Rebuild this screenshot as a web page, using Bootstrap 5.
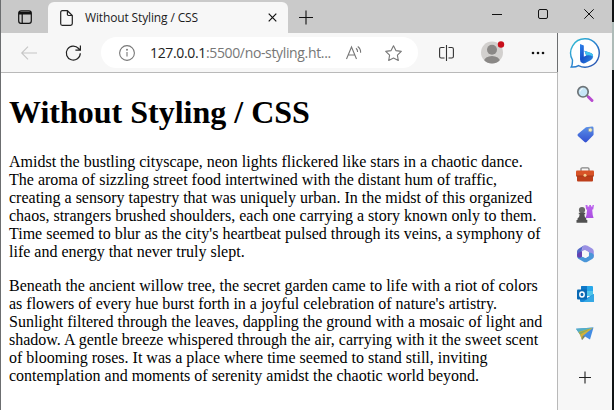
<!DOCTYPE html>
<html lang="en">
<head>
<meta charset="utf-8">
<meta name="viewport" content="width=device-width, initial-scale=1">
<title>Without Styling / CSS</title>
<link href="https://cdn.jsdelivr.net/npm/bootstrap@5.3.0/dist/css/bootstrap.min.css" rel="stylesheet">
<style>
  body { width: 614px; height: 410px; overflow: hidden; background: #f7f7f7; color: #000; }
  svg { display: block; flex: none; overflow: visible; }
  .browser { height: 410px; padding: 0 2px 0 1px; background: linear-gradient(#101314 22px, #aebbb8 22px 70px, #101314 70px) right / 2px 100% no-repeat, #6c6e70; }
  .titlebar { height: 33px; background: #cacaca; }
  .tab-menu { width: 47px; border-bottom-right-radius: 4px; padding-left: 17px; background: #c9c9c9; }
  .page-tab { width: 240px; height: 31px; background: #f7f7f7; border-radius: 6px 6px 0 0; padding: 0 7px 0 12px; }
  .tab-name { font: 12px/16px "Open Sans", "Noto Sans", sans-serif; letter-spacing: -.14px; margin-left: 12px; white-space: nowrap; color: #1c1c1c; }
  .new-tab { margin-left: 11px; }
  .window-buttons { height: 28px; gap: 36px; padding-right: 18px; }
  .toolbar { width: 556px; height: 39px; background: #f7f7f7; }
  .back { margin-left: 20px; }
  .reload { margin-left: 28px; }
  .split { margin-left: 21px; }
  .profile, .more { margin-left: 27px; }
  .address { width: 317px; height: 31px; background: #fff; border-radius: 16px; margin-left: 19px; padding: 0 16px 0 18px; }
  .url { font: 14px/20px "Open Sans", "Noto Sans", sans-serif; white-space: nowrap; color: #777; width: 196px; margin-left: 15px; letter-spacing: -.35px; }
  .url span { color: #222; }
  .viewport { width: 557px; border-top: 1px solid #b9b9b9; border-right: 1px solid #b9b9b9; background: #fff; padding: 21px 0 0 8px; font-family: "Liberation Serif", "Times New Roman", serif; }
  .viewport h1 { font-size: 32px; line-height: 36px; font-weight: 700; margin: 0 0 23px; }
  .viewport p { font-size: 16px; line-height: 18px; margin: 0 0 16px; white-space: nowrap; }
  .sidebar { width: 54px; background: #f7f7f7; }
  .slot { height: 40px; width: 54px; }
  .tools { padding-top: 1px; }
</style>
</head>
<body>
<div class="browser d-flex flex-column">
  <header class="titlebar d-flex align-items-end flex-shrink-0">
    <div class="tab-menu h-100 d-flex align-items-center">
      <svg width="14" height="14" viewBox="0 0 14 14" fill="none" stroke="#111" stroke-width="1.2"><rect x=".7" y=".8" width="12.6" height="12.5" rx="2.3"/><path d="M1 2.6h12M1 3.6h12" stroke-width="1.8"/><path d="M4.2 4v9"/></svg>
    </div>
    <div class="page-tab d-flex align-items-center">
      <svg width="13" height="16" viewBox="0 0 13 16" fill="none" stroke="#222" stroke-width="1.2"><path d="M2.3.7h5.1l4.9 4.8v8.1q0 1.7-1.7 1.7H2.3Q.7 15.3.7 13.6V2.4Q.7.7 2.3.7zM7.4.9v3.4q0 1.200 1.200 1.200h3.500"/></svg>
      <span class="tab-name">Without Styling / CSS</span>
      <svg class="ms-auto me-1" width="9" height="9" viewBox="0 0 9 9" stroke="#111" stroke-width="1.2"><path d="M.7.7l7.600 7.600M8.300.7L.7 8.300"/></svg>
    </div>
    <svg class="new-tab align-self-center" width="14" height="14" viewBox="0 0 14 14" stroke="#111" stroke-width="1.1"><path d="M0 7.500h14M7 .5v14"/></svg>
    <div class="window-buttons d-flex align-items-center ms-auto mb-auto">
      <svg width="10" height="10" viewBox="0 0 10 10" stroke="#111"><path d="M0 5.500h10"/></svg>
      <svg width="10" height="10" viewBox="0 0 10 10" fill="none" stroke="#111"><rect x=".5" y=".5" width="9" height="9" rx="1.500"/></svg>
      <svg width="10" height="10" viewBox="0 0 10 10" stroke="#111"><path d="M.3.3l9.400 9.400M9.700.3L.3 9.700"/></svg>
    </div>
  </header>
  <div class="d-flex flex-grow-1">
    <div class="d-flex flex-column">
      <nav class="toolbar d-flex align-items-center flex-shrink-0">
        <svg class="back" width="16" height="14" viewBox="0 0 16 14" fill="none" stroke="#c6c6c6" stroke-width="1.1"><path d="M16 7H.8M7 .7L.7 7l6.300 6.300"/></svg>
        <svg class="reload" width="17" height="16" viewBox="0 0 17 16" fill="none" stroke="#222" stroke-width="1.200"><path d="M15.300 8.200A7 7 0 1 1 13.600 3.500L15.200 5.100M15.400.4v4.800h-5"/></svg>
        <div class="address d-flex align-items-center">
          <svg width="16" height="16" viewBox="0 0 16 16" fill="none" stroke="#777" stroke-width="1.100"><circle cx="8" cy="8" r="7.400"/><path d="M8 7v4.500"/><circle cx="8" cy="4.800" r=".4"/></svg>
          <div class="url"><span>127.0.0.1</span>:5500/no-styling.ht...</div>
          <svg width="16" height="14" viewBox="0 0 16 14" fill="none" stroke="#777" stroke-width="1.100"><path d="M.5 13L5.500 1l5 12M2.300 9h6.500M10 2.200q1.700 1.300 1.600 3.800M11.700.5q3.200 2.300 2.900 6.300"/></svg>
          <svg class="ms-auto" width="17" height="16" viewBox="0 0 17 16" fill="none" stroke="#777" stroke-width="1.100" stroke-linejoin="round"><path d="M8.500.7l2.400 4.900 5.400.8-3.900 3.800.9 5.300-4.800-2.500-4.800 2.500.9-5.300L.7 6.400l5.400-.8z"/></svg>
        </div>
        <svg class="split" width="15" height="16" viewBox="0 0 15 16" fill="none" stroke="#333" stroke-width="1.100"><path d="M7.500 0v16M5.500 2.500H2.200Q.6 2.500.6 4.100v7.300Q.6 13 2.200 13h3.300M9.500 2.500h3.300q1.600 0 1.600 1.600v7.300q0 1.600-1.600 1.600H9.500"/></svg>
        <svg class="profile" width="23" height="23" viewBox="0 0 23 23"><defs><clipPath id="face"><circle cx="11" cy="11.500" r="11"/></clipPath></defs><g clip-path="url(#face)"><path fill="#d2d0ce" d="M0 0h23v23H0z"/><circle cx="11" cy="8.700" r="5" fill="#8a8886"/><ellipse cx="11" cy="20.500" rx="8" ry="5.500" fill="#8a8886"/></g><circle cx="20" cy="3.500" r="3.200" fill="#c80f1b"/></svg>
        <svg class="more" width="14" height="4" viewBox="0 0 14 4" fill="#111"><circle cx="2" cy="2" r="1.300"/><circle cx="7" cy="2" r="1.300"/><circle cx="12" cy="2" r="1.300"/></svg>
      </nav>
      <main class="viewport flex-grow-1">
        <h1>Without Styling / CSS</h1>
        <p>Amidst the bustling cityscape, neon lights flickered like stars in a chaotic dance.<br>The aroma of sizzling street food intertwined with the distant hum of traffic,<br>creating a sensory tapestry that was uniquely urban. In the midst of this organized<br>chaos, strangers brushed shoulders, each one carrying a story known only to them.<br>Time seemed to blur as the city's heartbeat pulsed through its veins, a symphony of<br>life and energy that never truly slept.</p>
        <p>Beneath the ancient willow tree, the secret garden came to life with a riot of colors<br>as flowers of every hue burst forth in a joyful celebration of nature's artistry.<br>Sunlight filtered through the leaves, dappling the ground with a mosaic of light and<br>shadow. A gentle breeze whispered through the air, carrying with it the sweet scent<br>of blooming roses. It was a place where time seemed to stand still, inviting<br>contemplation and moments of serenity amidst the chaotic world beyond.</p>
      </main>
    </div>
    <aside class="sidebar d-flex flex-column">
      <div class="slot d-flex align-items-center justify-content-center">
        <svg width="30" height="30" viewBox="0 0 30 30"><defs><linearGradient id="ring" x1="0" x2="1" y1="0" y2="1"><stop stop-color="#36c5d4"/><stop offset=".5" stop-color="#2884d0"/><stop offset="1" stop-color="#2948a8"/></linearGradient><linearGradient id="bee" x1="0" x2="1" y1="0" y2="1"><stop stop-color="#2f86ee"/><stop offset=".45" stop-color="#1750c9"/><stop offset="1" stop-color="#2f8fe0"/></linearGradient></defs><path d="M15 .8a14.200 14.200 0 1 1-6.500 26.800Q5.500 29.400 1.200 29q1.200-1.500 1.300-7A14.200 14.200 0 0 1 15 .8z" fill="#fff" stroke="url(#ring)" stroke-width="1.400"/><path d="M10 6l3.800 1.400v11.300l2.400-1.200-1.800-4.800 7.200 2.500q1.800 1 1.500 3.500-.2 2-2.100 3.300l-5.600 3q-1.800.8-3.200 0Q10 23.800 10 21.500z" fill="url(#bee)"/><path d="M14.400 12.700l7.200 2.500q1.800 1 1.500 3.500-3-2-6.900-1.200z" fill="#43c5ef"/></svg>
      </div>
      <div class="tools d-flex flex-column">
        <div class="slot d-flex align-items-center justify-content-center">
          <svg width="17" height="17" viewBox="0 0 17 17"><path d="M10 9.500l2 2" stroke="#777" stroke-width="2"/><path d="M11.500 11l3.500 3.500" stroke="#b84bd0" stroke-width="3" stroke-linecap="round"/><circle cx="6" cy="5.800" r="5.200" fill="#c7e6f7" stroke="#6d7478" stroke-width="1.700"/><path d="M3.200 5.500q.2-2.600 2.700-2.900" stroke="#f4fcff" fill="none"/></svg>
        </div>
        <div class="slot d-flex align-items-center justify-content-center">
          <svg width="17" height="17" viewBox="0 0 17 17"><defs><linearGradient id="blue" x2="0" y2="1"><stop stop-color="#5a91e8"/><stop offset="1" stop-color="#334fd0"/></linearGradient></defs><path d="M9 1.300L15 .5q1.400-.1 1.500 1.300l.1 6.400q0 .8-.6 1.400l-6.400 6.500q-1 .9-2 0L.9 9.900q-.9-1 0-2z" fill="url(#blue)"/><circle cx="13.300" cy="3.900" r="2" fill="#f4efbb" stroke="#8a99b2" stroke-width=".8"/></svg>
        </div>
        <div class="slot d-flex align-items-center justify-content-center">
          <svg width="18" height="15" viewBox="0 0 18 15"><path d="M5 4V2q0-1.200 1.200-1.200h5.600Q13 .8 13 2v2" fill="none" stroke="#858585" stroke-width="1.300"/><rect x="1" y="7" width="16" height="7.500" rx="1" fill="#bd3e1a"/><rect y="3.500" width="18" height="5.800" rx="1" fill="#d85327"/><path d="M0 9h18" stroke="#8e2e16" stroke-width=".7"/><circle cx="9" cy="8.300" r="1.500" fill="#f5cf90"/></svg>
        </div>
        <div class="slot d-flex align-items-center justify-content-center">
          <svg width="18" height="18" viewBox="0 0 18 18"><defs><linearGradient id="rook" x2="0" y2="1"><stop stop-color="#bd63ee"/><stop offset="1" stop-color="#a94fe0"/></linearGradient></defs><path d="M9.500 0h2v1.500h1.700V0h1.800v1.500h1.500V0H18l-.8 4.500h-1l.5 5.500.9 3H9.500l1-3 .6-5.500h-1z" fill="url(#rook)"/><circle cx="6" cy="5" r="3.100" fill="#696969"/><path d="M2.800 7.700h6.400v1.500H8.300q.1 3.100 2 4.300v1.600h1v2.600H.5v-2.600h1v-1.600q2-1.200 2.200-4.300h-.9z" fill="#515151"/></svg>
        </div>
        <div class="slot d-flex align-items-center justify-content-center">
          <svg width="17" height="18" viewBox="0 0 17 18"><path d="M9.500 0Q5.500.7 4.800 4.800L4.500 13 1.700 13.500Q0 12.300 0 10V6.500Q0 4.800 1.700 3.700L6 1Q8 0 9.500 0z" fill="#5369c6"/><path d="M6.500.8Q8.500-.4 10.500.8l4.700 2.800Q16.800 4.700 16.800 6.500V11q0 1.600-1.200 2.500l-3.700-2.300V7.400L7.500 5 5 6.300q-.2-4 1.500-5.500z" fill="#9b91e4"/><path d="M16.800 10v1q0 1.900-1.600 2.900l-4.700 2.800q-2 1.200-4 0L1.700 13.900Q.5 13 .2 11.700q3 1.200 5.300 0L8.500 13l3.400-2V7.500q4 0 4.900 2.500z" fill="#4a96d8"/><path d="M5 6.300v5.500q-2.500 1.600-4.500.3Q0 11 0 9.500 1.500 7 5 6.300z" fill="#6542b2"/><path d="M8.500 5.300l3.300 1.900v3.900L8.500 13l-3.300-1.900V7.200z" fill="#f7f7f7"/></svg>
        </div>
        <div class="slot d-flex align-items-center justify-content-center">
          <svg width="17" height="16" viewBox="0 0 17 16"><path d="M4 1q0-1 1-1h10q1 0 1 1v9H4z" fill="#28a8ea"/><path d="M4 1q0-1 1-1h5v5H4z" fill="#0f78c8"/><path d="M10 5h6v5h-6z" fill="#50c5ea"/><path d="M3 9l7 3 7-4v7q0 1-1 1H4q-1 0-1-1z" fill="#1689d9"/><path d="M17 8v7q0 1-1 1H6z" fill="#35a8e4"/><rect y="3.500" width="10" height="10" rx="1" fill="#0969b4"/><ellipse cx="5" cy="8.500" rx="2.200" ry="2.500" fill="none" stroke="#fff" stroke-width="1.400"/></svg>
        </div>
        <div class="slot d-flex align-items-center justify-content-center">
          <svg width="18" height="14" viewBox="0 0 18 14"><path d="M0 1.700L17.500.5 14 12.500l-5-3-3 3.500L4 7.500z" fill="#438ce2"/><path d="M0 1.700L17.500.5 4 7.500z" fill="#54b0c5"/><path d="M2.500 5L17 .8 6.800 9 6 13 4 7.500z" fill="#d2b23c"/><path d="M6 13l.8-4L9 9.600z" fill="#8a8240"/><path d="M3.300 5.300L15 1.500 4 7.500z" fill="#8bab5c"/></svg>
        </div>
      </div>
      <div class="slot d-flex align-items-center justify-content-center mt-1">
        <svg width="13" height="12" viewBox="0 0 13 12" stroke="#222" stroke-width="1.100"><path d="M0 5.500h12M6 -.5v12"/></svg>
      </div>
    </aside>
  </div>
</div>
<script src="https://cdn.jsdelivr.net/npm/bootstrap@5.3.0/dist/js/bootstrap.bundle.min.js"></script>
</body>
</html>
